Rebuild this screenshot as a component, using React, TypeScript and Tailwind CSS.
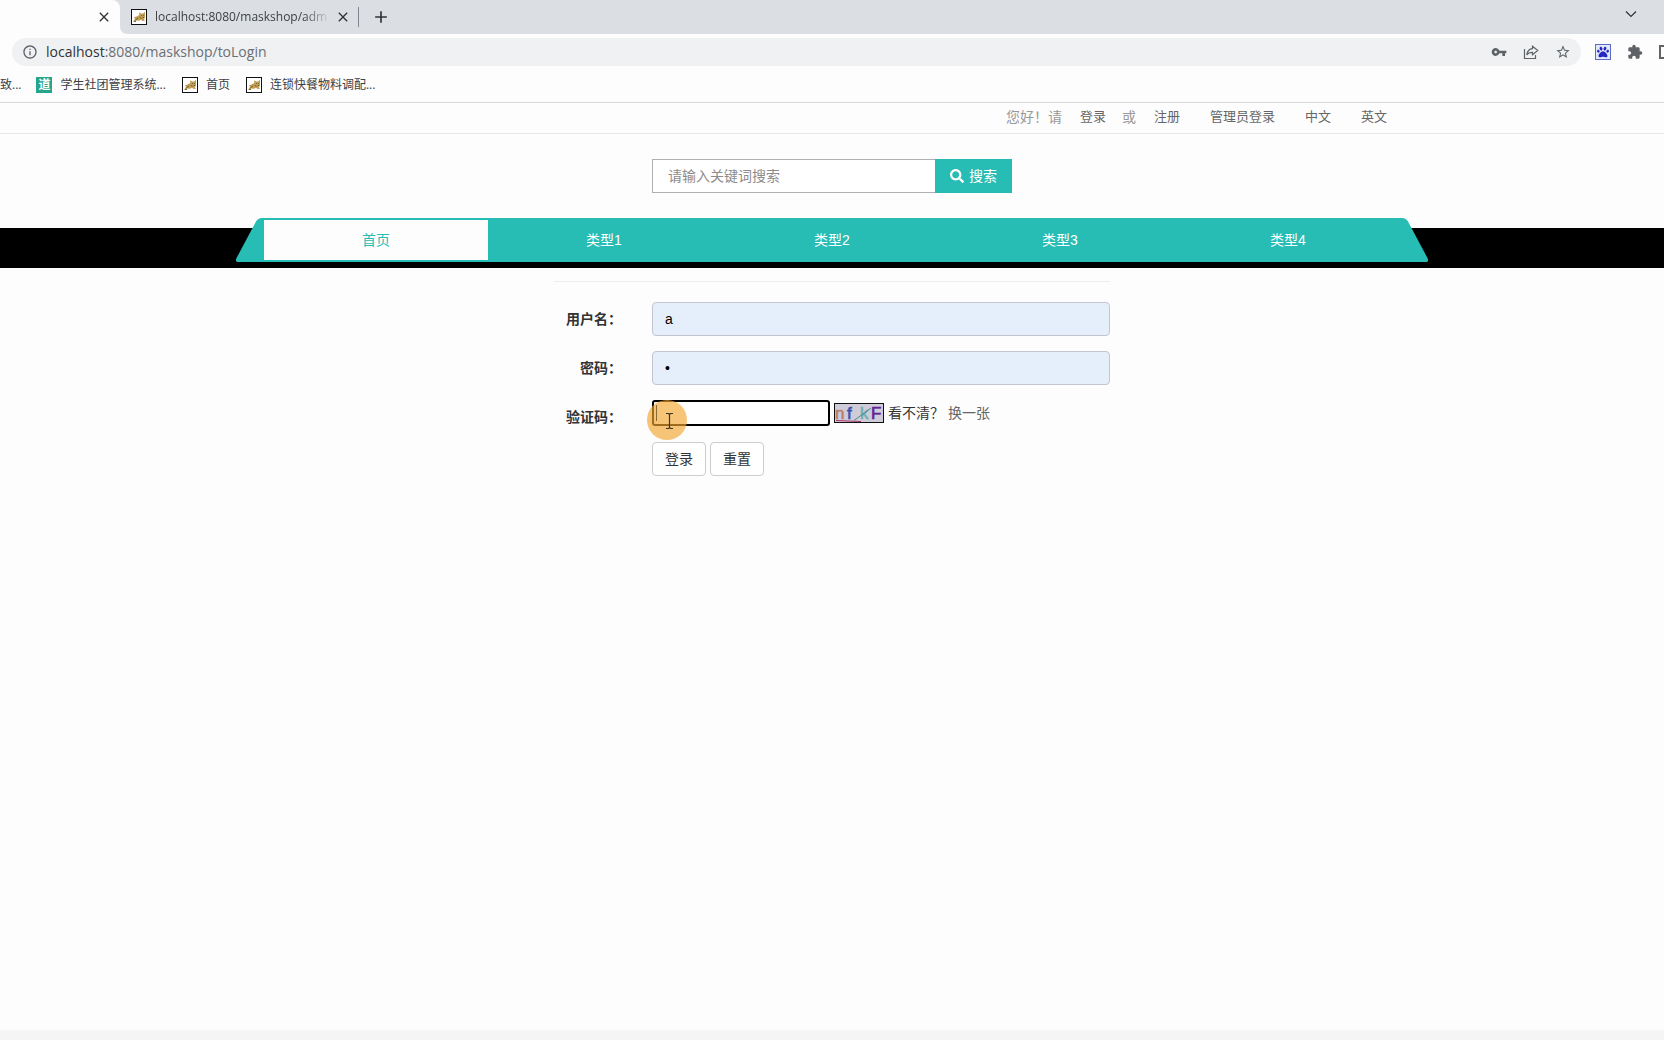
import type { ReactNode } from "react";
import { FaPaw, FaSearch } from "react-icons/fa";
import {
  MdAdd,
  MdClose,
  MdExtension,
  MdInfoOutline,
  MdStarBorder,
  MdVpnKey,
} from "react-icons/md";

const UI_FONT = "font-['Open_Sans','Noto_Sans_CJK_SC',sans-serif]";
const PAGE_FONT = "font-['Liberation_Sans','Noto_Sans_CJK_SC',sans-serif]";

const categories = ["首页", "类型1", "类型2", "类型3", "类型4"];

function TomcatIcon() {
  return (
    <svg viewBox="0 0 16 16" className="size-4 shrink-0" aria-hidden="true">
      <rect x=".5" y=".5" width="15" height="15" fill="#fff" stroke="#111" />
      <path
        d="M2 12.800 4 9.800 2.800 8.200 5.500 7.500 8.300 6 8 3.200 10.300 4.600 12 4.500 14 2.800V8.500L13 10.200 13.800 12H11.500L10 10.800 8 11.800 5.500 11.500 4 12.800z"
        fill="#c2a058"
      />
      <path
        d="M4.500 10.800 7 9M8.500 8.200 10.500 9.500M10 6.500h1M12.500 6.200v.8M11.500 8.500h1.500M3 12.500h2"
        fill="none"
        stroke="#5d4a25"
        strokeWidth=".8"
      />
    </svg>
  );
}

function DaoIcon() {
  return (
    <span className="grid size-4 shrink-0 place-items-center bg-[#25a58c] text-xs leading-4 font-bold text-white">
      道
    </span>
  );
}

function ShareIcon() {
  return (
    <svg
      viewBox="0 0 16 16"
      className="size-4"
      fill="none"
      stroke="#5f6368"
      strokeWidth="1.2"
      aria-hidden="true"
    >
      <path d="M1.500 5v9.500h11V11" />
      <path d="M9.500 2.200 14.800 6.500 9.500 10.800V8.300C6.800 8.200 5 9 3.800 11 4.200 7.500 6 5 9.500 4.700z" />
    </svg>
  );
}

function IconButton({ label, children }: { label: string; children: ReactNode }) {
  return (
    <button type="button" aria-label={label} className="shrink-0 text-[#5f6368]">
      {children}
    </button>
  );
}

function TabStrip() {
  return (
    <div className="flex h-[34px] bg-[#dbdfe4] text-[#3c4043]">
      <div className="flex w-[120px] items-center justify-end rounded-tr-lg bg-[#fdfdfd] pr-2">
        <IconButton label="关闭标签页">
          <MdClose className="size-4 text-[#303337]" />
        </IconButton>
      </div>
      <svg viewBox="0 0 8 8" className="size-2 self-end" aria-hidden="true">
        <path d="M0 0Q0 8 8 8H0Z" fill="#fdfdfd" />
      </svg>
      <div className="flex items-center pl-[3px]">
        <TomcatIcon />
        <span className="ml-2 w-[175px] mask-r-from-85% text-xs leading-5 whitespace-nowrap">
          localhost:8080/maskshop/adm
        </span>
        <div className="ml-[5px] flex">
          <IconButton label="关闭标签页">
            <MdClose className="size-4 text-[#303337]" />
          </IconButton>
        </div>
        <span className="mr-3 ml-[7px] h-5 w-px bg-[#80868b]" />
        <IconButton label="新建标签页">
          <MdAdd className="size-5 text-[#303337]" />
        </IconButton>
      </div>
      <div className="ml-auto flex items-start pt-2 pr-[27px]">
        <IconButton label="搜索标签页">
          <svg viewBox="0 0 12 12" className="size-3" fill="none" stroke="#303337" strokeWidth="1.2">
            <path d="M1 3.500 6 8.500 11 3.500" />
          </svg>
        </IconButton>
      </div>
    </div>
  );
}

function AddressBar() {
  return (
    <div className="flex h-9 items-center overflow-hidden pl-3">
      <div className="flex h-7 flex-1 items-center rounded-full bg-[#eff1f3] px-[10px]">
        <MdInfoOutline className="size-4 text-[#5f6368]" />
        <p className="ml-2 text-sm leading-5 text-[#6b6f74]">
          <span className="text-[#303337]">localhost</span>:8080/maskshop/toLogin
        </p>
        <div className="ml-auto flex items-center gap-4">
          <IconButton label="密码">
            <MdVpnKey className="size-4" />
          </IconButton>
          <IconButton label="分享">
            <ShareIcon />
          </IconButton>
          <IconButton label="收藏">
            <MdStarBorder className="size-4" />
          </IconButton>
        </div>
      </div>
      <div className="flex w-[83px] shrink-0 items-center gap-4 pl-[14px]">
        <IconButton label="百度">
          <span className="grid size-4 place-items-center border border-[#5a6cc4] bg-[#e3e8fb]">
            <FaPaw className="size-3 text-[#2428c0]" />
          </span>
        </IconButton>
        <IconButton label="扩展程序">
          <MdExtension className="size-4" />
        </IconButton>
        <IconButton label="侧边栏">
          <span className="block size-[14px] border-2 border-[#5f6368]" />
        </IconButton>
      </div>
    </div>
  );
}

function BookmarkBar() {
  return (
    <div className="flex h-[33px] items-center border-b border-[#d6d8da] pb-[3px] text-xs leading-4 text-[#3c4043]">
      <a href="#">致...</a>
      <a href="#" className="ml-[15px] flex items-center gap-2">
        <DaoIcon />
        学生社团管理系统...
      </a>
      <a href="#" className="ml-4 flex items-center gap-2">
        <TomcatIcon />
        首页
      </a>
      <a href="#" className="ml-4 flex items-center gap-2">
        <TomcatIcon />
        连锁快餐物料调配...
      </a>
    </div>
  );
}

function TopLinks() {
  return (
    <div className="border-b border-[#e7e7e7]">
      <div className="mx-auto flex h-[30px] max-w-[1140px] items-center justify-end pr-[15px] pb-[2px] text-[13px] leading-5 text-[#666]">
        <span className="text-sm leading-5 text-[#999]">您好！请</span>
        <a href="#" className="ml-[18px]">登录</a>
        <span className="ml-4 text-sm leading-5 text-[#999]">或</span>
        <a href="#" className="ml-[18px]">注册</a>
        <a href="#" className="ml-[30px]">管理员登录</a>
        <a href="#" className="ml-[30px]">中文</a>
        <a href="#" className="ml-[30px]">英文</a>
      </div>
    </div>
  );
}

function SearchForm() {
  return (
    <form className="mx-auto mt-[25px] flex h-[34px] w-[360px]" onSubmit={(e) => e.preventDefault()}>
      <input
        type="text"
        aria-label="搜索"
        placeholder="请输入关键词搜索"
        className="min-w-0 flex-1 border border-r-0 border-[#b0b0b0] bg-white px-[15px] text-sm outline-none placeholder:text-[#8c8c8c]"
      />
      <button
        type="submit"
        className="flex w-[77px] items-center justify-center gap-[5px] bg-[#27bcb4] text-sm leading-5 text-white"
      >
        <FaSearch className="size-[14px]" />
        搜索
      </button>
    </form>
  );
}

function CategoryNav() {
  return (
    <nav className="mt-[25px] flex justify-center bg-[linear-gradient(to_bottom,transparent_10px,black_10px)] pb-[6px]">
      <svg viewBox="0 0 26 44" className="h-11 w-[26px]" aria-hidden="true">
        <path d="M26 0Q22 0 20 3.500L.8 39.500Q-1.500 44 2 44H26Z" fill="#27bcb4" />
      </svg>
      <ul className="flex h-11 w-full max-w-[1140px] bg-[#27bcb4] text-sm leading-5">
        {categories.map((name, i) => (
          <li key={name} className="flex-1 p-[2px]">
            <a
              href="#"
              className={
                i === 0
                  ? "flex h-full items-center justify-center bg-[#fdfdfd] text-[#27bcb4]"
                  : "flex h-full items-center justify-center text-white"
              }
            >
              {name}
            </a>
          </li>
        ))}
      </ul>
      <svg viewBox="0 0 26 44" className="h-11 w-[26px]" aria-hidden="true">
        <path d="M0 0Q4 0 6 3.500L25.200 39.500Q27.500 44 24 44H0Z" fill="#27bcb4" />
      </svg>
    </nav>
  );
}

function Captcha() {
  return (
    <svg viewBox="0 0 50 20" className="h-5 w-[50px]" role="img" aria-label="nfkF">
      <rect x=".5" y=".5" width="49" height="19" fill="#cfcbd8" stroke="#111" />
      <g fontFamily="Liberation Sans" fontSize="17" strokeWidth=".6">
        <text x="1" y="16" fill="#b97f6c" stroke="#b97f6c">n</text>
        <text x="13" y="16" fill="#3b4fb0" stroke="#3b4fb0">f</text>
        <text x="26" y="16" fill="#6cb0b3" stroke="#6cb0b3">k</text>
        <text x="37" y="16" fill="#5f2396" stroke="#5f2396">F</text>
      </g>
      <path d="M2 17.500 27 18.500" stroke="#a8336a" />
      <path d="M20 17.500 37 5" stroke="#4c8a92" />
    </svg>
  );
}

function PointerHighlight() {
  return (
    <svg
      viewBox="0 0 40 40"
      className="pointer-events-none absolute top-0 -left-[5px] size-10"
      fill="none"
      aria-hidden="true"
    >
      <circle cx="20" cy="20" r="20" fill="#f2a62e" fillOpacity=".65" />
      <path d="M9.500 5v16" stroke="#8a6a30" />
      <path
        d="M19 13.500h2.500L22.500 14.500 23.500 13.500H26M22.500 14.500v13M19 28.500h2.500l1-1 1 1H26"
        stroke="#3f3524"
        strokeWidth="1.2"
      />
    </svg>
  );
}

const labelClass = "w-[83px] shrink-0 pr-[15px] text-right font-bold text-[#333]";
const fieldClass =
  "h-[34px] min-w-0 flex-1 rounded border border-[#c2c7cf] bg-[#e5eefb] px-3 text-black outline-none";
const buttonClass = "h-[34px] w-[54px] rounded border border-[#ccc] bg-white text-[#333]";

function LoginForm() {
  return (
    <form
      className="mx-auto mt-[13px] w-[556px] border-t border-[#eee] pt-5 text-sm leading-5"
      onSubmit={(e) => e.preventDefault()}
    >
      <div className="flex items-center gap-[15px]">
        <label htmlFor="username" className={labelClass}>用户名：</label>
        <input id="username" type="text" defaultValue="a" className={fieldClass} />
      </div>
      <div className="mt-[15px] flex items-center gap-[15px]">
        <label htmlFor="password" className={labelClass}>密码：</label>
        <input id="password" type="password" defaultValue="a" className={fieldClass} />
      </div>
      <div className="mt-[15px] flex h-[34px] items-center gap-[15px]">
        <label htmlFor="captcha" className={labelClass}>验证码：</label>
        <div className="relative flex items-center gap-1 self-start">
          <input
            id="captcha"
            type="text"
            className="h-[26px] w-[178px] rounded-[3px] border-2 border-black bg-white px-1 outline-none"
          />
          <Captcha />
          <span className="text-[#333]">看不清？</span>
          <a href="#" className="text-[#666]">换一张</a>
          <PointerHighlight />
        </div>
      </div>
      <div className="mt-2 flex gap-1 pl-[98px]">
        <button type="submit" className={buttonClass}>登录</button>
        <button type="reset" className={buttonClass}>重置</button>
      </div>
    </form>
  );
}

export default function App() {
  return (
    <div className="flex min-h-screen flex-col bg-[#fdfdfd]">
      <header className={UI_FONT}>
        <TabStrip />
        <AddressBar />
        <BookmarkBar />
      </header>
      <main className={`flex-1 ${PAGE_FONT}`}>
        <TopLinks />
        <SearchForm />
        <CategoryNav />
        <LoginForm />
      </main>
      <footer className="h-[10px] bg-[#f5f5f5]" />
    </div>
  );
}
